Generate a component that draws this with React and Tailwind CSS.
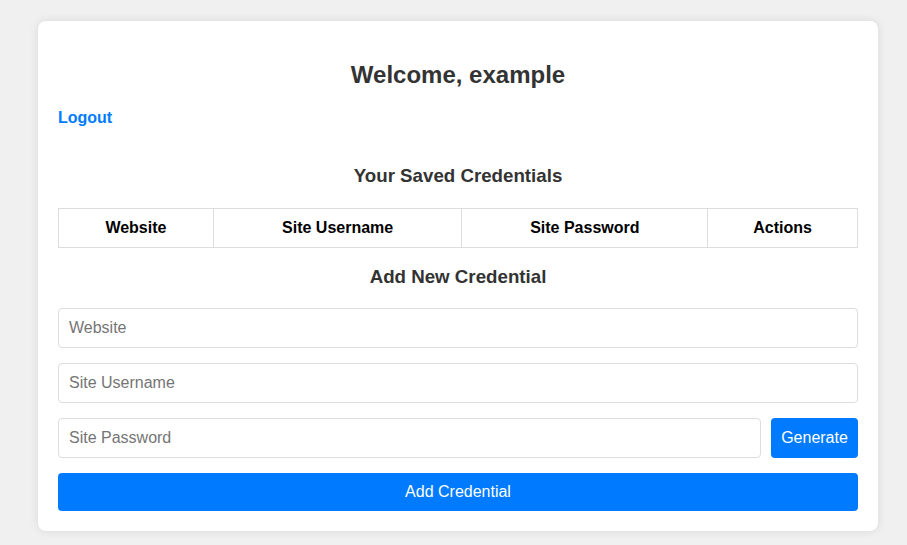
export default function App() {
  const cols = [
    { label: 'Website', w: 'w-[155px]' },
    { label: 'Site Username', w: 'w-[249px]' },
    { label: 'Site Password', w: 'w-[246px]' },
    { label: 'Actions', w: 'w-[150px]' },
  ]

  return (
    <div className="min-h-[545px] bg-[#f0f0f0] pl-[38px] pt-[21px] font-['Liberation_Sans',Arial,sans-serif]">
      <div className="w-[840px] rounded-lg bg-white px-5 pt-5 pb-5 shadow-[0_0_10px_rgba(0,0,0,0.1)]">
        <h2 className="mt-5 text-center text-[24px] font-bold leading-[28px] text-[#333]">
          Welcome, example
        </h2>
        <div className="mt-[20px] flex h-[18px]">
          <button className="text-[16px] font-bold leading-[18px] text-[#007bff]">Logout</button>
        </div>

        <h3 className="mt-[38px] text-center text-[18.72px] font-bold leading-[22px] text-[#333]">
          Your Saved Credentials
        </h3>
        <table className="mt-[21px] w-[800px] border-collapse">
          <thead>
            <tr>
              {cols.map((c) => (
                <th
                  key={c.label}
                  className={`${c.w} h-[39px] border border-[#ddd] p-0 text-center text-[16px] font-bold text-black`}
                >
                  {c.label}
                </th>
              ))}
            </tr>
          </thead>
        </table>

        <h3 className="mt-[18px] text-center text-[18.72px] font-bold leading-[22px] text-[#333]">
          Add New Credential
        </h3>
        <div className="mt-[20px] flex flex-col gap-[15px]">
          <input
            className="h-10 w-full rounded border border-[#ddd] px-[10px] text-[16px] outline-none placeholder:text-[#757575]"
            placeholder="Website"
          />
          <input
            className="h-10 w-full rounded border border-[#ddd] px-[10px] text-[16px] outline-none placeholder:text-[#757575]"
            placeholder="Site Username"
          />
          <div className="flex gap-[10px]">
            <input
              className="h-10 min-w-0 flex-1 rounded border border-[#ddd] px-[10px] text-[16px] outline-none placeholder:text-[#757575]"
              placeholder="Site Password"
            />
            <button className="h-10 w-[87px] rounded bg-[#007bff] text-[16px] text-white">Generate</button>
          </div>
          <button className="h-[38px] w-full rounded bg-[#007bff] text-[16px] text-white">Add Credential</button>
        </div>
      </div>
    </div>
  )
}
